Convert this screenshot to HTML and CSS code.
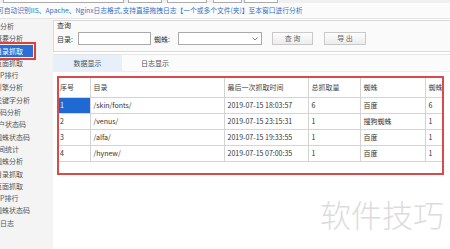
FILE: index.html
```html
<!DOCTYPE html>
<html lang="zh">
<head>
<meta charset="utf-8">
<link rel="stylesheet" href="styles.css">
</head>
<body>
<div class="toolbar">
  <span class="tb tb-a"></span>
  <span class="tb tb-b"></span>
  <span class="tb tb-c"></span>
  <span class="tb tb-d"></span>
  <span class="tb tb-e"></span>
</div>
<div class="notice">可自动识别IIS、Apache、Nginx日志格式,支持直接拖拽日志【一个或多个文件(夹)】至本窗口进行分析</div>
<div class="main">
  <ul class="side">
    <li><span>分析</span></li>
    <li class="cut"><span>概要分析</span></li>
    <li class="cut"><span class="sel">目录抓取</span></li>
    <li class="cut"><span>页面抓取</span></li>
    <li class="cut-s"><span>IP排行</span></li>
    <li class="cut"><span>引擎分析</span></li>
    <li class="cut"><span>关键字分析</span></li>
    <li><span>码分析</span></li>
    <li class="cut-s"><span>户状态码</span></li>
    <li class="cut"><span>蜘蛛状态码</span></li>
    <li class="cut-s"><span>间统计</span></li>
    <li class="cut"><span>蜘蛛分析</span></li>
    <li class="cut"><span>目录抓取</span></li>
    <li class="cut"><span>页面抓取</span></li>
    <li class="cut-s"><span>IP排行</span></li>
    <li class="cut"><span>蜘蛛状态码</span></li>
    <li><span>日志</span></li>
  </ul>
  <div class="content">
    <div class="query">
      <div class="q-title">查询</div>
      <div class="q-row">
        <span class="lbl lbl-dir">目录:</span>
        <span class="input"></span>
        <span class="lbl lbl-spider">蜘蛛:</span>
        <span class="select"><svg class="chev" width="6" height="4" viewBox="0 0 6 4"><path d="M0.5 0.5 L3 3 L5.5 0.5" fill="none" stroke="#777" stroke-width="0.9"/></svg></span>
        <span class="btn btn-q">查 询</span>
        <span class="btn btn-e">导 出</span>
      </div>
    </div>
    <div class="tabs">
      <div class="tab active">数据显示</div>
      <div class="tab">日志显示</div>
    </div>
    <div class="grid-box">
      <table class="grid">
        <colgroup>
          <col class="c1"><col class="c2"><col class="c3"><col class="c4"><col class="c5"><col class="c6">
        </colgroup>
        <thead>
          <tr><th>序号</th><th>目录</th><th>最后一次抓取时间</th><th>总抓取量</th><th>蜘蛛</th><th>蜘蛛抓取量</th></tr>
        </thead>
        <tbody>
          <tr><td class="picked">1</td><td>/skin/fonts/</td><td>2019-07-15 18:03:57</td><td>6</td><td>百度</td><td>6</td></tr>
          <tr><td>2</td><td>/venus/</td><td>2019-07-15 23:15:31</td><td>1</td><td>搜狗蜘蛛</td><td>1</td></tr>
          <tr><td>3</td><td>/alfa/</td><td>2019-07-15 19:33:55</td><td>1</td><td>百度</td><td>1</td></tr>
          <tr><td>4</td><td>/hynew/</td><td>2019-07-15 07:00:35</td><td>1</td><td>百度</td><td>1</td></tr>
        </tbody>
      </table>
    </div>
  </div>
</div>
<div class="watermark">软件技巧</div>
</body>
</html>
```

FILE: styles.css
```css
* { box-sizing: border-box; }
html, body {
  margin: 0;
  padding: 0;
}
body {
  width: 450px;
  height: 249px;
  overflow: hidden;
  position: relative;
  background: #fff;
  font-family: "Noto Sans CJK SC", "Noto Sans", sans-serif;
  font-size: 7px;
  color: #444;
}

/* top strip (bottom of toolbar inputs) */
.toolbar {
  height: 3px;
  display: flex;
  background: #f0f0f0;
}
.tb {
  display: block;
  height: 3px;
  background: #fff;
  border: 1px solid #aaa;
  border-top: 0;
}
.tb-a { margin-left: 3px; width: 121px; }
.tb-b { margin-left: 4px; width: 34px; }
.tb-c { margin-left: 5px; width: 40px; }
.tb-d { margin-left: 6px; width: 29px; }
.tb-e { margin-left: 2px; width: 34px; }

.notice {
  height: 16px;
  line-height: 15px;
  font-size: 6.75px;
  color: #2f73c4;
  white-space: nowrap;
  text-indent: -3px;
  border-bottom: 1px solid #e4e4e4;
  background: #fbfbfb;
}

.main {
  display: flex;
  height: 230px;
}

.side {
  list-style: none;
  margin: 0;
  padding: 1px 0 0 0;
  width: 53px;
  flex: none;
  background: #f4f4f4;
  overflow: hidden;
}
.side li {
  height: 12.3px;
  line-height: 12.3px;
  white-space: nowrap;
  color: #555;
}
.side li span { display: block; }
.side li.cut span { text-indent: -5px; }
.side li.cut-s span { text-indent: -2px; }
.side .sel {
  width: 33px;
  background: #2c6fd2;
  color: #fff;
  outline: 2px solid #e23c3c;
  outline-offset: 1px;
}

.content {
  flex: 1;
  display: flex;
  flex-direction: column;
  padding-top: 1px;
  min-width: 0;
}

.query {
  height: 32px;
  border: 1px solid #d9d9d9;
  border-right: 0;
  background: #fafafa;
  padding-left: 3px;
}
.q-title {
  height: 10px;
  line-height: 9px;
  color: #333;
}
.q-row {
  margin-top: 1px;
  height: 13px;
  display: flex;
  align-items: center;
}
.lbl { color: #333; white-space: nowrap; }
.lbl-dir { width: 21px; }
.lbl-spider { width: 24px; margin-left: 3px; }
.input {
  width: 73px;
  height: 13px;
  background: #fff;
  border: 1px solid #a9a9a9;
}
.select {
  width: 84px;
  height: 13px;
  background: #fff;
  border: 1px solid #a9a9a9;
  display: flex;
  align-items: center;
  justify-content: flex-end;
  padding-right: 3px;
}
.btn {
  height: 13px;
  line-height: 11px;
  text-align: center;
  color: #666;
  background: linear-gradient(#fdfdfd, #ececec);
  border: 1px solid #c9c9c9;
}
.btn-q { width: 41px; margin-left: 10px; }
.btn-e { width: 42px; margin-left: 11px; }

.tabs {
  margin-top: 2px;
  height: 18px;
  display: flex;
  background: #fbfbfb;
  border-top: 1px solid #e6e6e6;
  border-bottom: 1px solid #eeeeee;
}
.tab {
  width: 66px;
  line-height: 16px;
  text-align: center;
  color: #555;
}
.tab.active {
  width: 69px;
  background: #e7f0fa;
}

.grid-box {
  margin: 4px 6px 0 4px;
  height: 99px;
  border: 2px solid #d94a4a;
  background: #fff;
  overflow: hidden;
}
.grid {
  border-collapse: collapse;
  table-layout: fixed;
  width: 426px;
}
.grid .c1 { width: 31px; }
.grid .c2 { width: 134px; }
.grid .c3 { width: 84px; }
.grid .c4 { width: 52px; }
.grid .c5 { width: 65px; }
.grid .c6 { width: 60px; }
.grid th, .grid td {
  border-right: 1px solid #d4d4d4;
  border-bottom: 1px solid #d4d4d4;
  padding: 0 0 0 3px;
  text-align: left;
  white-space: nowrap;
  overflow: hidden;
  font-weight: normal;
  color: #333;
}
.grid th {
  height: 19px;
  color: #444;
}
.grid td { height: 16px; }
.grid th:first-child, .grid td:first-child { padding-left: 1px; }
.grid td.picked {
  background: #1f69d2;
  color: #fff;
}

.watermark {
  position: absolute;
  left: 320px;
  top: 196px;
  font-size: 31px;
  line-height: 36px;
  font-weight: 300;
  color: #dcdcdc;
  white-space: nowrap;
  font-family: "Noto Sans CJK SC", sans-serif;
}
```
